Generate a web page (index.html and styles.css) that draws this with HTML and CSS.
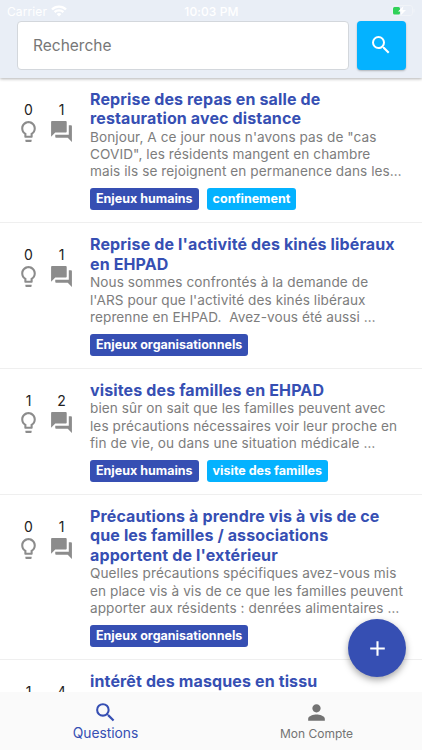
FILE: index.html
```
<!DOCTYPE html>
<html lang="fr">
<head>
    <meta charset="UTF-8">
    <meta name="viewport" content="width=device-width, initial-scale=1.0">
    <title>Questions</title>
    <link rel="stylesheet" href="styles.css">
</head>
<body>
    <!-- Shared icons -->
    <svg class="sprite" aria-hidden="true">
        <symbol id="search" viewBox="0 0 24 24"><path d="M15.5 14h-.79l-.28-.27A6.47 6.47 0 0 0 16 9.5 6.5 6.5 0 1 0 9.5 16c1.61 0 3.09-.59 4.23-1.57l.27.28v.79l5 4.99L20.49 19l-4.99-5zm-6 0C7.01 14 5 11.99 5 9.5S7.01 5 9.5 5 14 7.01 14 9.5 11.99 14 9.5 14z"/></symbol>
        <symbol id="bulb" viewBox="0 0 24 24"><path d="M9 21c0 .55.45 1 1 1h4c.55 0 1-.45 1-1v-1H9v1zm3-19C8.14 2 5 5.14 5 9c0 2.38 1.19 4.47 3 5.74V17c0 .55.45 1 1 1h6c.55 0 1-.45 1-1v-2.26c1.81-1.27 3-3.36 3-5.74 0-3.86-3.14-7-7-7zm2.85 11.1l-.85.6V16h-4v-2.3l-.85-.6C7.8 12.16 7 10.63 7 9c0-2.76 2.24-5 5-5s5 2.24 5 5c0 1.63-.8 3.16-2.15 4.1z"/></symbol>
        <symbol id="forum" viewBox="0 0 24 24"><path d="M21 6h-2v9H6v2c0 .55.45 1 1 1h11l4 4V7c0-.55-.45-1-1-1zm-4 6V3c0-.55-.45-1-1-1H3c-.55 0-1 .45-1 1v14l4-4h10c.55 0 1-.45 1-1z"/></symbol>
        <symbol id="person" viewBox="0 0 24 24"><path d="M12 12c2.21 0 4-1.79 4-4s-1.79-4-4-4-4 1.79-4 4 1.79 4 4 4zm0 2c-2.67 0-8 1.34-8 4v2h16v-2c0-2.66-5.33-4-8-4z"/></symbol>
        <symbol id="add" viewBox="0 0 24 24"><path d="M19 13h-6v6h-2v-6H5v-2h6V5h2v6h6v2z"/></symbol>
    </svg>

    <header class="header">
        <div class="status-bar">
            <div class="carrier">
                <span>Carrier</span>
                <svg width="16" height="12" viewBox="0 0 16 12" fill="none" stroke="#fff" stroke-width="2.4"><path d="M1 4.5a10 10 0 0 1 14 0M3.6 7.2a6.2 6.2 0 0 1 8.8 0" fill="none"/><path d="M8 11.5L5.6 9.1a3.4 3.4 0 0 1 4.8 0z" fill="#fff" stroke="none"/></svg>
            </div>
            <span class="time">10:03 PM</span>
            <svg class="battery" width="24" height="12" viewBox="0 0 24 12"><rect x=".5" y=".5" width="20" height="10" rx="2.5" fill="none" stroke="#f0f3f8"/><rect x="1" y="2" width="7" height="7.5" rx="1.5" fill="#30d158"/><path d="M11.5 1L6 6.500h3.500L8.500 10.500 14 5h-3.500z" fill="#fff"/><path d="M22 4v3.500" stroke="#f0f3f8"/></svg>
        </div>
        <form class="search-form">
            <input class="search-input" type="text" placeholder="Recherche">
            <button class="search-button" type="button" aria-label="Recherche"><svg><use href="#search"/></svg></button>
        </form>
    </header>

    <main class="list">
        <article class="question">
            <div class="counters">
                <div class="counter"><span>0</span><svg><use href="#bulb"/></svg></div>
                <div class="counter"><span>1</span><svg><use href="#forum"/></svg></div>
            </div>
            <div class="content">
                <h2>Reprise des repas en salle de<br>restauration avec distance</h2>
                <p>Bonjour, A ce jour nous n'avons pas de "cas<br>COVID", les résidents mangent en chambre<br>mais ils se rejoignent en permanence dans les…</p>
                <div class="tags"><span class="tag">Enjeux humains</span><span class="tag tag-light">confinement</span></div>
            </div>
        </article>
        <article class="question">
            <div class="counters">
                <div class="counter"><span>0</span><svg><use href="#bulb"/></svg></div>
                <div class="counter"><span>1</span><svg><use href="#forum"/></svg></div>
            </div>
            <div class="content">
                <h2>Reprise de l'activité des kinés libéraux<br>en EHPAD</h2>
                <p>Nous sommes confrontés à la demande de<br>l'ARS pour que l'activité des kinés libéraux<br>reprenne en EHPAD.&nbsp; Avez-vous été aussi …</p>
                <div class="tags"><span class="tag">Enjeux organisationnels</span></div>
            </div>
        </article>
        <article class="question">
            <div class="counters">
                <div class="counter"><span>1</span><svg><use href="#bulb"/></svg></div>
                <div class="counter"><span>2</span><svg><use href="#forum"/></svg></div>
            </div>
            <div class="content">
                <h2>visites des familles en EHPAD</h2>
                <p>bien sûr on sait que les familles peuvent avec<br>les précautions nécessaires voir leur proche en<br>fin de vie, ou dans une situation médicale …</p>
                <div class="tags"><span class="tag">Enjeux humains</span><span class="tag tag-light">visite des familles</span></div>
            </div>
        </article>
        <article class="question">
            <div class="counters">
                <div class="counter"><span>0</span><svg><use href="#bulb"/></svg></div>
                <div class="counter"><span>1</span><svg><use href="#forum"/></svg></div>
            </div>
            <div class="content">
                <h2>Précautions à prendre vis à vis de ce<br>que les familles / associations<br>apportent de l'extérieur</h2>
                <p>Quelles précautions spécifiques avez-vous mis<br>en place vis à vis de ce que les familles peuvent<br>apporter aux résidents : denrées alimentaires …</p>
                <div class="tags"><span class="tag">Enjeux organisationnels</span></div>
            </div>
        </article>
        <article class="question">
            <div class="counters">
                <div class="counter"><span>1</span><svg><use href="#bulb"/></svg></div>
                <div class="counter"><span>4</span><svg><use href="#forum"/></svg></div>
            </div>
            <div class="content">
                <h2>intérêt des masques en tissu</h2>
            </div>
        </article>
    </main>

    <button class="fab" aria-label="Ajouter"><svg><use href="#add"/></svg></button>

    <nav class="bottom-nav">
        <a class="nav-item active"><svg><use href="#search"/></svg><span>Questions</span></a>
        <a class="nav-item"><svg><use href="#person"/></svg><span>Mon Compte</span></a>
    </nav>
</body>
</html>
```
FILE: styles.css
```
* {
    margin: 0;
    padding: 0;
    box-sizing: border-box;
    font-family: Inter, sans-serif;
}

body {
    position: relative;
    display: flex;
    flex-direction: column;
    height: 100vh;
    overflow: hidden;
    background: #fff;
}

svg {
    display: block;
    flex-shrink: 0;
    fill: currentColor;
}

.sprite {
    position: absolute;
    width: 0;
    height: 0;
}

.header {
    flex: none;
    height: 78px;
    background: #e9eef6;
    box-shadow: 0 1px 3px rgba(0, 0, 0, 0.3);
    z-index: 1;
}

.status-bar {
    display: grid;
    grid-template-columns: 1fr auto 1fr;
    align-items: center;
    height: 21px;
    padding: 1px 6px 0 7px;
    color: #fff;
    font-size: 12px;
    letter-spacing: 0.1px;
}

.carrier {
    display: flex;
    align-items: center;
    gap: 4px;
}

.time {
    font-weight: 500;
}

.battery {
    justify-self: end;
}

.search-form {
    display: flex;
    gap: 8px;
    padding: 0 16px 0 17px;
}

.search-input {
    flex: 1;
    min-width: 0;
    height: 49px;
    padding: 0 15px 1px;
    border: 1px solid #d3d7dc;
    border-radius: 4px;
    background: #fff;
    font-size: 15.5px;
}

.search-input::placeholder {
    color: #777;
}

.search-button {
    display: flex;
    align-items: center;
    justify-content: center;
    width: 49px;
    height: 49px;
    border: none;
    border-radius: 4px;
    background: #04b2ff;
    color: #fff;
    box-shadow: 0 1px 2px rgba(0, 0, 0, 0.25);
}

.search-button svg {
    width: 24px;
    height: 24px;
    margin: 0 2px 2px 0;
}

.list {
    flex: 1;
    min-height: 0;
    overflow: hidden;
    margin-top: -0.4px;
}

.question {
    display: flex;
    padding: 12px 0 12px 12px;
    border-bottom: 1px solid #efefef;
}

.counters {
    display: flex;
    flex: none;
    width: 78px;
    padding-top: 11px;
}

.counter {
    display: flex;
    flex-direction: column;
    align-items: center;
    width: 33px;
    color: #222;
    font-size: 14px;
    line-height: 18px;
}

.counter svg {
    width: 25px;
    height: 25px;
    color: #8c8c8c;
}

.content {
    white-space: nowrap;
}

h2 {
    color: #364fb3;
    font-size: 16px;
    font-weight: 700;
    line-height: 19.5px;
    letter-spacing: 0.13px;
}

p {
    color: #7d7d7d;
    font-size: 13.6px;
    line-height: 17.4px;
    letter-spacing: 0.08px;
}

.tags {
    display: flex;
    gap: 8px;
    margin-top: 7.4px;
}

.tag {
    height: 22px;
    padding: 0 6px;
    border-radius: 3px;
    background: #364fb3;
    color: #fff;
    font-size: 12.5px;
    font-weight: 700;
    line-height: 22px;
}

.tag-light {
    background: #04b2ff;
}

.fab {
    position: absolute;
    right: 16px;
    bottom: 73px;
    display: flex;
    align-items: center;
    justify-content: center;
    width: 58px;
    height: 58px;
    border: none;
    border-radius: 50%;
    background: #364fb3;
    color: #fff;
    box-shadow: 0 3px 7px rgba(0, 0, 0, 0.35);
}

.fab svg {
    width: 25px;
    height: 25px;
}

.bottom-nav {
    display: flex;
    flex: none;
    height: 58px;
    background: #fafafa;
}

.nav-item {
    display: flex;
    flex: 1;
    flex-direction: column;
    align-items: center;
    padding-top: 8px;
    color: #737373;
    font-size: 12px;
    line-height: 18px;
}

.nav-item svg {
    width: 25px;
    height: 25px;
}

.nav-item.active {
    color: #364fb3;
    font-size: 13.8px;
    line-height: 17px;
}
```
